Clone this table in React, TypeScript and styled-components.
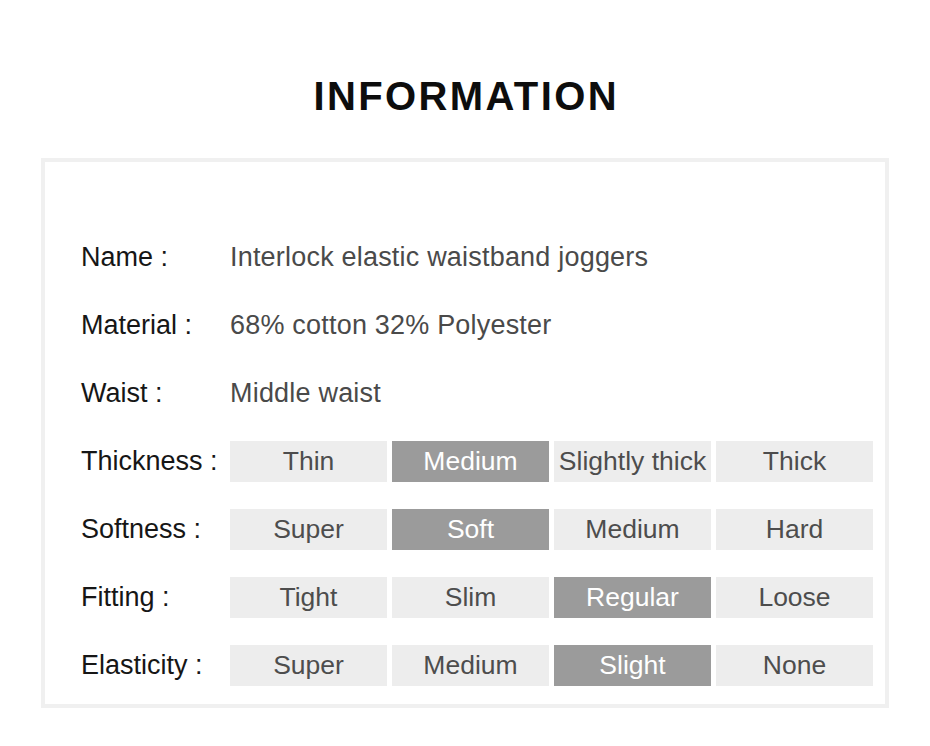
import React from "react";
import styled, { createGlobalStyle } from "styled-components";

const Global = createGlobalStyle`
  html, body { margin: 0; padding: 0; background: #ffffff; }
  body { font-family: "Liberation Sans", Arial, sans-serif; }
`;

const Page = styled.div`
  width: 930px;
  height: 746px;
  background: #fff;
  display: flex;
  flex-direction: column;
  align-items: center;
  box-sizing: border-box;
  padding-top: 76px;
`;

const Title = styled.h1`
  margin: 0;
  font-family: "Liberation Sans", Arial, sans-serif;
  font-weight: 700;
  font-size: 40px;
  line-height: 40px;
  letter-spacing: 2.4px;
  margin-right: -2.4px;
  color: #0d0d0d;
`;

const Panel = styled.div`
  margin-top: 42px;
  width: 848px;
  height: 550px;
  box-sizing: border-box;
  border: 4px solid #f0f0f0;
  padding: 75px 16px 0 36px;
  display: flex;
  flex-direction: column;
  gap: 27px;
`;

const Row = styled.div`
  display: grid;
  grid-template-columns: 149px 1fr;
  align-items: center;
  height: 41px;
`;

const Label = styled.div`
  font-size: 27px;
  color: #161616;
  white-space: nowrap;
`;

const Value = styled.div`
  font-size: 27px;
  letter-spacing: 0.2px;
  color: #4a4a4a;
  white-space: nowrap;
`;

const Scale = styled.div`
  display: grid;
  grid-template-columns: repeat(4, 157px);
  column-gap: 5px;
`;

const Cell = styled.div<{ $active?: boolean }>`
  height: 41px;
  display: flex;
  align-items: center;
  justify-content: center;
  font-size: 26.5px;
  white-space: nowrap;
  background: ${(p) => (p.$active ? "#9b9b9b" : "#ededed")};
  color: ${(p) => (p.$active ? "#ffffff" : "#4d4d4d")};
`;

const textRows = [
  { label: "Name :", value: "Interlock elastic waistband joggers" },
  { label: "Material :", value: "68% cotton 32% Polyester" },
  { label: "Waist :", value: "Middle waist" },
];

const scaleRows = [
  { label: "Thickness :", options: ["Thin", "Medium", "Slightly thick", "Thick"], active: 1 },
  { label: "Softness :", options: ["Super", "Soft", "Medium", "Hard"], active: 1 },
  { label: "Fitting :", options: ["Tight", "Slim", "Regular", "Loose"], active: 2 },
  { label: "Elasticity :", options: ["Super", "Medium", "Slight", "None"], active: 2 },
];

export default function App() {
  return (
    <>
      <Global />
      <Page>
        <Title>INFORMATION</Title>
        <Panel>
          {textRows.map((r) => (
            <Row key={r.label}>
              <Label>{r.label}</Label>
              <Value>{r.value}</Value>
            </Row>
          ))}
          {scaleRows.map((r) => (
            <Row key={r.label}>
              <Label>{r.label}</Label>
              <Scale>
                {r.options.map((o, i) => (
                  <Cell key={o} $active={i === r.active}>
                    {o}
                  </Cell>
                ))}
              </Scale>
            </Row>
          ))}
        </Panel>
      </Page>
    </>
  );
}
